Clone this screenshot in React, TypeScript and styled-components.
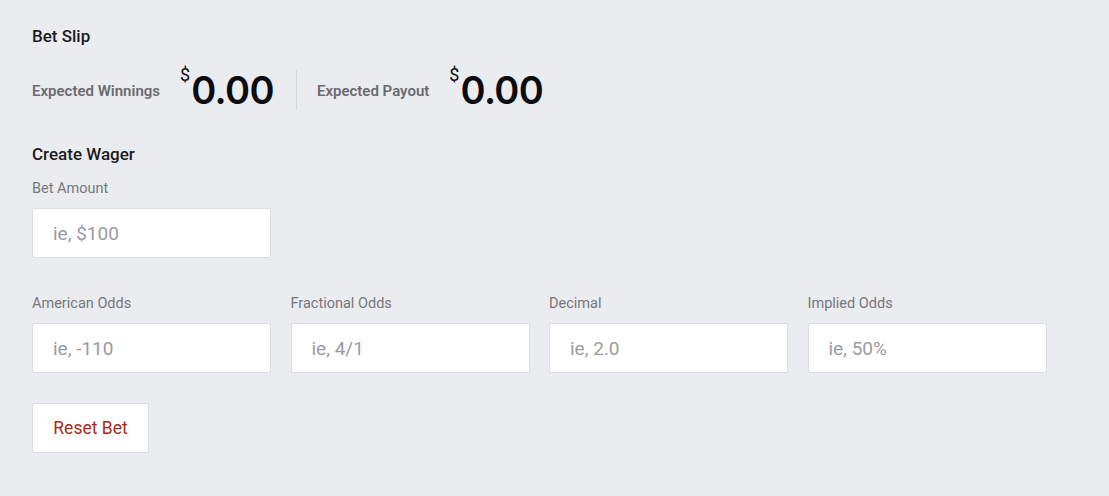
import React from "react";
import styled, { createGlobalStyle } from "styled-components";

const Global = createGlobalStyle`
  html, body { margin: 0; padding: 0; background: #ebecf0; }
  body { font-family: Roboto, "Noto Sans", sans-serif; }
  * { box-sizing: border-box; }
`;

const Page = styled.div`
  width: 1109px;
  height: 496px;
  padding: 26px 32px 0 32px;
  background: #ebecf0;
  display: flex;
  flex-direction: column;
`;

const Title = styled.h2`
  margin: 0;
  font-size: 17px;
  font-weight: 500;
  color: #1b1b1f;
  line-height: 20px;
`;

const Stats = styled.div`
  display: flex;
  align-items: center;
  margin-top: 24px;
  height: 40px;
`;

const Stat = styled.div<{ $first?: boolean }>`
  display: flex;
  align-items: center;
  padding-right: 22px;
  padding-left: ${(p) => (p.$first ? 0 : 20)}px;
  border-right: ${(p) => (p.$first ? "1px solid #d6d7db" : "none")};
  height: 40px;
`;

const StatLabel = styled.span`
  font-size: 15px;
  font-weight: 600;
  color: #6a6b70;
  margin-right: 20px;
  margin-top: 2px;
`;

const Amount = styled.div`
  display: flex;
  align-items: flex-start;
  color: #0b0b10;
`;

const Dollar = styled.span`
  font-size: 18px;
  line-height: 18px;
  font-weight: 400;
  margin-top: -6px;
  margin-right: 1px;
`;

const Value = styled.span`
  font-family: Inter, Roboto, sans-serif;
  font-size: 38px;
  line-height: 36px;
  font-weight: 600;
  letter-spacing: -0.6px;
`;

const Section = styled.h3`
  margin: 34px 0 0 0;
  font-size: 17px;
  font-weight: 500;
  color: #1b1b1f;
  line-height: 20px;
`;

const Row = styled.div<{ $mt: number }>`
  display: flex;
  gap: 19.5px;
  margin-top: ${(p) => p.$mt}px;
`;

const Field = styled.label`
  display: flex;
  flex-direction: column;
  width: 239px;
`;

const Label = styled.span`
  font-size: 14.5px;
  color: #76777c;
  line-height: 18px;
  margin-bottom: 10px;
`;

const Input = styled.input`
  height: 50px;
  width: 100%;
  border: 1px solid #dcdde1;
  border-radius: 2px;
  background: #fff;
  padding: 0 20px;
  font-family: Roboto, "Noto Sans", sans-serif;
  font-size: 19px;
  color: #333;
  outline: none;
  &::placeholder { color: #9a9ba0; }
`;

const Reset = styled.button`
  margin-top: 30px;
  width: 117px;
  height: 50px;
  background: #fff;
  border: 1px solid #dcdde1;
  border-radius: 2px;
  color: #ab2b16;
  font-family: Roboto, "Noto Sans", sans-serif;
  font-size: 17.5px;
  padding: 0;
  cursor: pointer;
`;

const Money = ({ v }: { v: string }) => (
  <Amount>
    <Dollar>$</Dollar>
    <Value>{v}</Value>
  </Amount>
);

export default function App() {
  return (
    <>
      <Global />
      <Page>
        <Title>Bet Slip</Title>
        <Stats>
          <Stat $first>
            <StatLabel>Expected Winnings</StatLabel>
            <Money v="0.00" />
          </Stat>
          <Stat>
            <StatLabel>Expected Payout</StatLabel>
            <Money v="0.00" />
          </Stat>
        </Stats>
        <Section>Create Wager</Section>
        <Row $mt={16}>
          <Field>
            <Label>Bet Amount</Label>
            <Input placeholder="ie, $100" />
          </Field>
        </Row>
        <Row $mt={37}>
          <Field>
            <Label>American Odds</Label>
            <Input placeholder="ie, -110" />
          </Field>
          <Field>
            <Label>Fractional Odds</Label>
            <Input placeholder="ie, 4/1" />
          </Field>
          <Field>
            <Label>Decimal</Label>
            <Input placeholder="ie, 2.0" />
          </Field>
          <Field>
            <Label>Implied Odds</Label>
            <Input placeholder="ie, 50%" />
          </Field>
        </Row>
        <Reset>Reset Bet</Reset>
      </Page>
    </>
  );
}
